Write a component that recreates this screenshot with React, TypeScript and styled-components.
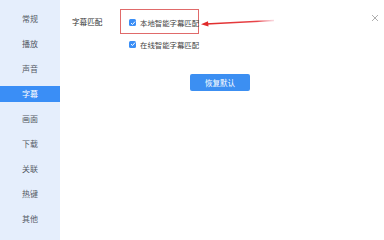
import React from "react";
import styled, { createGlobalStyle } from "styled-components";

const Global = createGlobalStyle`
  html, body { margin: 0; padding: 0; background: #fff; }
  body { font-family: "Noto Sans CJK SC", "Noto Sans", sans-serif; }
`;

const Window = styled.div`
  width: 384px;
  height: 240px;
  display: flex;
  background: #fff;
  position: relative;
  overflow: hidden;
`;

const Sidebar = styled.nav`
  width: 60px;
  flex: none;
  background: #e5eefc;
  display: flex;
  flex-direction: column;
  padding-top: 11px;
  box-sizing: border-box;
`;

const NavItem = styled.div<{ $active?: boolean }>`
  height: 16px;
  margin-bottom: 9px;
  display: flex;
  align-items: center;
  justify-content: center;
  font-size: 8px;
  line-height: 1;
  color: ${(p) => (p.$active ? "#fff" : "#555b66")};
  background: ${(p) => (p.$active ? "#3a8ef6" : "transparent")};
`;

const Content = styled.main`
  flex: 1;
  display: flex;
  flex-direction: column;
  padding: 9px 0 0 12px;
  position: relative;
`;

const Row = styled.div`
  display: flex;
  align-items: flex-start;
`;

const Label = styled.div`
  width: 48px;
  font-size: 7.6px;
  color: #333;
  line-height: 26px;
  height: 26px;
`;

const Options = styled.div`
  display: flex;
  flex-direction: column;
`;

const Highlight = styled.div`
  border: 1px solid #e06a6a;
  height: 25px;
  width: 79px;
  box-sizing: border-box;
  display: flex;
  align-items: center;
  padding: 2px 0 0 8px;
`;

const Option = styled.label<{ $indent?: boolean }>`
  display: flex;
  align-items: center;
  gap: 4px;
  font-size: 7.4px;
  color: #444;
  white-space: nowrap;
  padding-left: ${(p) => (p.$indent ? "9px" : "0")};
  margin-top: ${(p) => (p.$indent ? "5px" : "0")};
  height: 10px;
`;

const Box = styled.span`
  width: 7px;
  height: 7px;
  border-radius: 1.5px;
  background: #3a8ef6;
  display: inline-flex;
  align-items: center;
  justify-content: center;
`;

const Button = styled.button`
  margin: 25px 0 0 118px;
  width: 60px;
  height: 17px;
  border: none;
  border-radius: 2px;
  background: #3c8ff2;
  color: #fff;
  font-family: inherit;
  font-size: 7.5px;
  padding: 0;
  display: flex;
  align-items: center;
  justify-content: center;
`;

const Close = styled.div`
  position: absolute;
  top: 3px;
  right: 5px;
  width: 8px;
  height: 8px;
`;

const Arrow = styled.svg`
  position: absolute;
  left: 200px;
  top: 17px;
`;

const Check = () => (
  <Box>
    <svg width="6" height="6" viewBox="0 0 6 6">
      <path d="M1 3.1 L2.5 4.5 L5 1.6" stroke="#fff" strokeWidth="1" fill="none" />
    </svg>
  </Box>
);

const items = ["常规", "播放", "声音", "字幕", "画面", "下载", "关联", "热键", "其他"];

export default function App() {
  return (
    <>
      <Global />
      <Window>
        <Sidebar>
          {items.map((t) => (
            <NavItem key={t} $active={t === "字幕"}>
              {t}
            </NavItem>
          ))}
        </Sidebar>
        <Content>
          <Row>
            <Label>字幕匹配</Label>
            <Options>
              <Highlight>
                <Option>
                  <Check />
                  本地智能字幕匹配
                </Option>
              </Highlight>
              <Option $indent>
                <Check />
                在线智能字幕匹配
              </Option>
            </Options>
          </Row>
          <Button>恢复默认</Button>
        </Content>
        <Close>
          <svg width="8" height="8" viewBox="0 0 8 8">
            <path d="M1 1 L7 7 M7 1 L1 7" stroke="#9a9a9a" strokeWidth="0.8" />
          </svg>
        </Close>
        <Arrow width="80" height="14" viewBox="0 0 80 14">
          <defs>
            <linearGradient id="ag" x1="0" x2="1" y1="0" y2="0">
              <stop offset="0" stopColor="#e02a2a" />
              <stop offset="0.75" stopColor="#e8454a" />
              <stop offset="1" stopColor="#f2a0b0" stopOpacity="0.4" />
            </linearGradient>
          </defs>
          <path d="M6 7 L74 3.5" stroke="url(#ag)" strokeWidth="1.3" fill="none" />
          <path d="M1 7.3 L8 4.2 L8.5 9.6 Z" fill="#e02a2a" />
        </Arrow>
      </Window>
    </>
  );
}
